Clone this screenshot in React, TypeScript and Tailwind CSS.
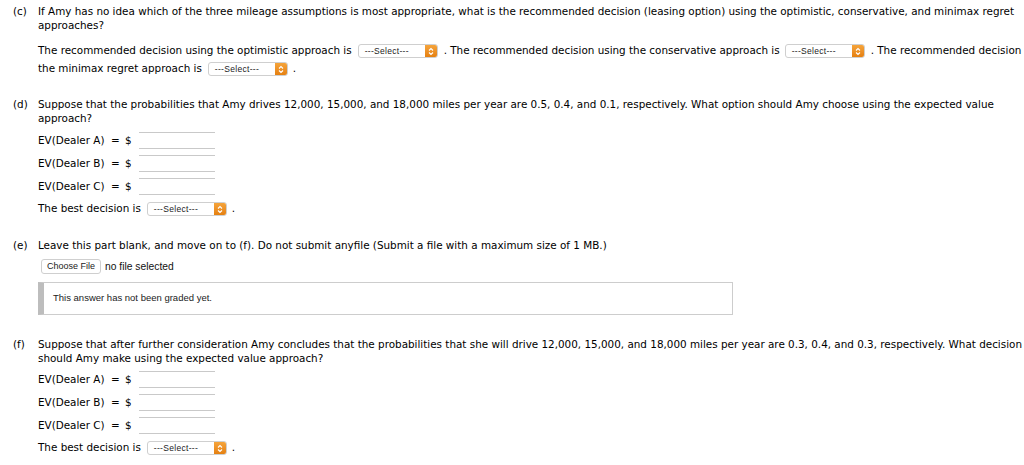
import React from 'react';

const mainFont = { fontFamily: '"DejaVu Sans", Verdana, sans-serif' };

function SelectBox({ className = '' }: { className?: string }) {
  return (
    <span
      className={`inline-flex items-center justify-between h-[14px] w-[80px] border border-[#cfcfcf] rounded-[3px] bg-white align-middle ${className}`}
    >
      <span className="pl-[6px] text-[8.5px] tracking-[0.3px] leading-none text-[#222] font-['Liberation_Sans',Arial,sans-serif]">
        ---Select---
      </span>
      <span className="flex items-center justify-center w-[12px] h-[12px] rounded-r-[2px] bg-gradient-to-b from-[#f5a43a] to-[#e5800e]">
        <svg width="6" height="9" viewBox="0 0 6 9" fill="none">
          <path d="M1 3.5 L3 1.5 L5 3.5" stroke="white" strokeWidth="1.1" />
          <path d="M1 5.5 L3 7.5 L5 5.5" stroke="white" strokeWidth="1.1" />
        </svg>
      </span>
    </span>
  );
}

function EvRow({ dealer }: { dealer: string }) {
  return (
    <div className="flex items-center h-[23px]">
      <span className="w-[69px] whitespace-nowrap">EV(Dealer {dealer})</span>
      <span className="ml-[4px] w-[14px]">=</span>
      <span className="w-[14px]">$</span>
      <span className="w-[76px] h-[17px] border-y border-[#c9c9c9] bg-white" />
    </div>
  );
}

function BestDecision() {
  return (
    <div className="flex items-center h-[22px] whitespace-nowrap">
      <span>The best decision is</span>
      <SelectBox className="ml-[6px]" />
      <span className="ml-[5px]">.</span>
    </div>
  );
}

function Part({ label, children, className = '' }: { label: string; children: React.ReactNode; className?: string }) {
  return (
    <div className={`flex pl-[13px] ${className}`}>
      <div className="w-[25px] shrink-0 leading-[14px]">{label}</div>
      <div className="flex flex-col">{children}</div>
    </div>
  );
}

export default function App() {
  return (
    <div className="w-[1024px] h-[465px] overflow-hidden bg-white text-black text-[10.4px]" style={mainFont}>
      {/* (c) */}
      <Part label="(c)" className="pt-[4px]">
        <div className="leading-[14px] whitespace-nowrap">
          <div>
            If Amy has no idea which of the three mileage assumptions is most appropriate, what is the recommended decision (leasing option) using the optimistic, conservative, and minimax regret
          </div>
          <div>approaches?</div>
        </div>
        <div className="mt-[10px] whitespace-nowrap">
          <div className="flex items-center h-[18px]">
            <span>The recommended decision using the optimistic approach is</span>
            <SelectBox className="ml-[6px]" />
            <span className="ml-[6px]">. The recommended decision using the conservative approach is</span>
            <SelectBox className="ml-[5px]" />
            <span className="ml-[6px]">. The recommended decision using</span>
          </div>
          <div className="flex items-center h-[18px]">
            <span>the minimax regret approach is</span>
            <SelectBox className="ml-[6px]" />
            <span className="ml-[5px]">.</span>
          </div>
        </div>
      </Part>

      {/* (d) */}
      <Part label="(d)" className="mt-[19px]">
        <div className="leading-[14px] whitespace-nowrap">
          <div>
            Suppose that the probabilities that Amy drives 12,000, 15,000, and 18,000 miles per year are 0.5, 0.4, and 0.1, respectively. What option should Amy choose using the expected value
          </div>
          <div>approach?</div>
        </div>
        <div className="mt-[4px]">
          <EvRow dealer="A" />
          <EvRow dealer="B" />
          <EvRow dealer="C" />
          <BestDecision />
        </div>
      </Part>

      {/* (e) */}
      <Part label="(e)" className="mt-[18px]">
        <div className="leading-[14px] whitespace-nowrap">
          Leave this part blank, and move on to (f). Do not submit anyfile (Submit a file with a maximum size of 1 MB.)
        </div>
        <div className="mt-[7px] flex items-center h-[15px] font-['Liberation_Sans',Arial,sans-serif]">
          <span className="ml-[3px] inline-flex items-center h-[15px] px-[5px] border border-[#cfcfcf] rounded-[3px] bg-white text-[9px] text-[#222]">
            Choose File
          </span>
          <span className="ml-[4px] text-[10.3px] text-[#111]">no file selected</span>
        </div>
        <div className="mt-[8px] w-[695px] h-[33px] flex items-center border border-[#cdcdcd] border-l-[6px] border-l-[#bdbdbd] bg-white">
          <span className="pl-[9px] text-[9.5px] text-[#222] font-['Liberation_Sans',Arial,sans-serif]">
            This answer has not been graded yet.
          </span>
        </div>
      </Part>

      {/* (f) */}
      <Part label="(f)" className="mt-[22px]">
        <div className="leading-[14px] whitespace-nowrap">
          <div>
            Suppose that after further consideration Amy concludes that the probabilities that she will drive 12,000, 15,000, and 18,000 miles per year are 0.3, 0.4, and 0.3, respectively. What decision
          </div>
          <div>should Amy make using the expected value approach?</div>
        </div>
        <div className="mt-[3px]">
          <EvRow dealer="A" />
          <EvRow dealer="B" />
          <EvRow dealer="C" />
          <BestDecision />
        </div>
      </Part>
    </div>
  );
}
